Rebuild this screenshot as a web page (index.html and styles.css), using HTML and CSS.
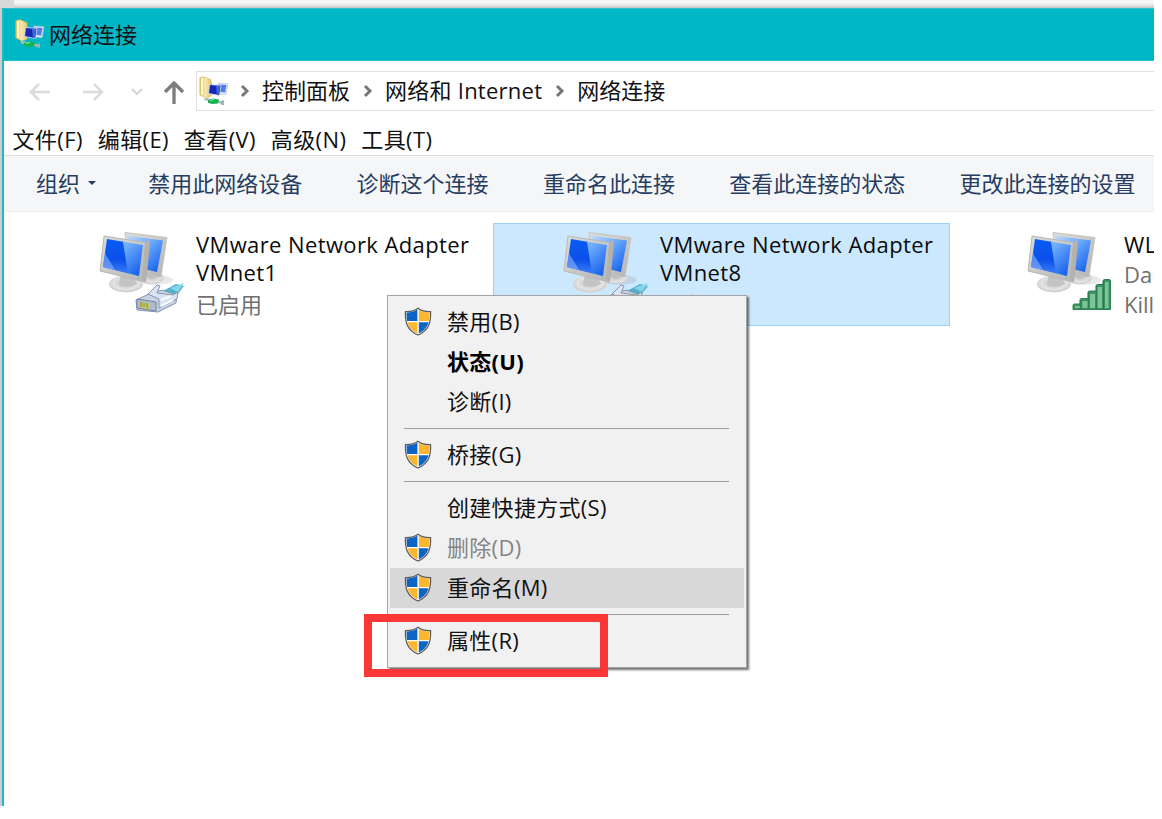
FILE: index.html
```html
<!DOCTYPE html>
<html lang="zh-CN">
<head>
<meta charset="utf-8">
<title>网络连接</title>
<link rel="stylesheet" href="styles.css">
</head>
<body>
<svg class="defs" width="0" height="0" aria-hidden="true">
  <defs>
    <linearGradient id="screen" x1="0" y1="0" x2="1" y2="1"><stop offset="0" stop-color="#b9dbff"/><stop offset=".45" stop-color="#65a5fb"/><stop offset="1" stop-color="#0a55ea"/></linearGradient>
    <linearGradient id="deep" x1="0" y1="0" x2="0" y2="1"><stop offset="0" stop-color="#0a5cf2"/><stop offset=".6" stop-color="#0b50ea"/><stop offset="1" stop-color="#3c7cf6"/></linearGradient>
    <linearGradient id="metal" x1="0" y1="0" x2="1" y2="1"><stop offset="0" stop-color="#dcdcda"/><stop offset="1" stop-color="#b4b4b3"/></linearGradient>
    <radialGradient id="foot" cx=".5" cy=".45" r=".6"><stop offset="0" stop-color="#b9b9b9"/><stop offset=".6" stop-color="#e4e4e4"/><stop offset="1" stop-color="#c4c4c4"/></radialGradient>
    <linearGradient id="paper" x1="0" y1="0" x2="1" y2="0"><stop offset="0" stop-color="#e3bf5c"/><stop offset=".5" stop-color="#f9e8ac"/><stop offset="1" stop-color="#e5c468"/></linearGradient>
    <symbol id="monitors" viewBox="0 0 88 86">
      <ellipse cx="56" cy="51" rx="18" ry="5" fill="#777" opacity=".16"/>
      <ellipse cx="53" cy="49" rx="12" ry="6" fill="url(#foot)"/>
      <path d="M48 39h11l1 9H47z" fill="#bbb"/>
      <path d="M26 3.500 68 8.500 62 48 28 42z" fill="url(#metal)" stroke="#c5c5c3"/>
      <path d="M29 7 64 11.500 58 43 31 37z" fill="url(#screen)"/>
      <ellipse cx="27" cy="55" rx="17" ry="8.500" fill="url(#foot)"/>
      <path d="M22 45h12l4 10q-10 6-18 0z" fill="#c4c4c4"/>
      <path d="M5 7 50 14 46 53 1 42z" fill="url(#metal)" stroke="#b9b9b7"/>
      <path d="M46 14 50 11 51 15 47 53 43 49z" fill="#b4b2af"/>
      <path d="M8 10 44 16 40 47 4 38z" fill="url(#screen)"/>
      <path d="M8 10 24 12.700 29 44.300 4 38z" fill="url(#deep)"/>
      <path d="M6 24 16 41 4 38z" fill="#91bcfb" opacity=".55"/>
    </symbol>
    <symbol id="plug" viewBox="0 0 52 34">
      <path d="m29 11 13-7 8 2-7 9-8 1z" fill="#4fb3cf"/>
      <path d="m36 8 14-5-6 9z" fill="#8bd4e6"/>
      <path d="M2 20 15 14l13-4 15 5-1 8-18 9-21-2z" fill="#c7d3e4" stroke="#8795ad"/>
      <path d="m14 14 9-9 3 1-3 7 16 2 5-3-1 7-18 9v-9z" fill="#dae4f1" stroke="#8997ae"/>
      <path d="M3 19 22 22v9L3 28z" fill="#aebccd" stroke="#76849a"/>
      <path d="m5 22 11 1.500v6L5 27z" fill="#cdca59"/>
      <path d="M7 22v5m3-4v4m3-4v5" stroke="#707e54" stroke-width=".9"/>
      <path d="m27 20 10-4M27 26l12-6" stroke="#f9fcff" stroke-width="2"/>
    </symbol>
    <symbol id="signal" viewBox="0 0 40 32">
      <path d="M1 30.500v-4q0-1.500 1.500-1.500H8v-4q0-1.500 1.500-1.500H16v-6q0-1.500 1.500-1.500H24V7q0-1.500 1.500-1.500H31V2q0-1.500 1.500-1.500H37q1.500 0 1.500 1.500v28.500z" fill="#3c9464" stroke="#2d7e52"/>
      <path d="M3 27h5v2H3zM10.500 22h5v7h-5zM18 15h5v14h-5zM25.500 8H30v21h-4.500zM33 3h3.500v26H33z" fill="#7cc397"/>
      <path d="M8.500 21v9M16.500 13v17M24.500 7v23M31.500 2v28" stroke="#2d7e52" stroke-width="1.300"/>
    </symbol>
    <symbol id="folder" viewBox="0 0 30 30">
      <path d="M10 5l3 2v11l-3 2z" fill="#d5ad44"/>
      <path d="M.8 1.500 5 .7l7 3v16.500L7 22 .8 19z" fill="url(#paper)" stroke="#d6b963" stroke-width=".6"/>
      <path d="M3 2v17" stroke="#fff8d8" stroke-width="1.800"/>
      <path d="m19 7 10 .7-2 11-9-1z" fill="#d9e5f8" stroke="#b4c2dd" stroke-width=".6"/>
      <path d="m20 8.500 7.500.5-1.500 7.500-7-1z" fill="#517ce8"/>
      <path d="m10.500 8.500 11.500 1-1.500 10-11-2z" fill="#1726b5" stroke="#dce5fa" stroke-width=".8"/>
      <path d="m17 9.500 4 .3-1 8.500-2.300-.5z" fill="#3f68dd"/>
      <path d="M5.500 23 25 27" stroke="#a6bcb9" stroke-width="2.300"/>
      <path d="m9 24.300 5-1.800 6 1-1 4-6 .5-4-1.200z" fill="#16b352"/>
      <path d="m11 24.500 4-1" stroke="#89efac"/>
      <path d="m22 26 3-1.300M22 27.500l3 1" stroke="#91aeb5" stroke-width="1.500"/>
    </symbol>
    <symbol id="shield" viewBox="0 0 28 29">
      <path d="M14 1.200C10.500 3.800 6 4.800 1.500 4.600 1 15 3 23.500 14 28 25 23.500 27 15 26.500 4.600 22 4.800 17.500 3.800 14 1.200z" fill="#fff"/>
      <path d="M13.400 2.600C10 4.800 6.500 5.600 2.600 5.600c-.1 3 0 5.800.5 8.400h10.300z" fill="#0c65c4"/>
      <path d="M14.800 2.600c3.200 2.200 6.700 3 10.600 3 .1 3 0 5.800-.5 8.400H14.800z" fill="#fdb62f"/>
      <path d="M3.400 15.300h10v11.200C7.500 23.700 4.700 20 3.400 15.300z" fill="#fdb62f"/>
      <path d="M24.600 15.300h-9.800v11.200c5.700-2.800 8.500-6.500 9.800-11.200z" fill="#0c65c4"/>
      <path d="M14 1.200C10.500 3.800 6 4.800 1.500 4.600 1 15 3 23.500 14 28 25 23.500 27 15 26.500 4.600 22 4.800 17.500 3.800 14 1.200z" fill="none" stroke="#595b5e" stroke-width="1.300"/>
    </symbol>
    <symbol id="chevron" viewBox="0 0 10 14"><path d="m2 2 5 5-5 5" fill="none" stroke="#767676" stroke-width="2.900"/></symbol>
  </defs>
</svg>
<div class="desktop">
  <div class="backdrop"></div>
  <main class="window">
    <header class="titlebar"><svg class="title-icon"><use href="#folder"/></svg><span>网络连接</span></header>
    <nav class="address-row">
      <div class="nav-buttons">
        <svg class="back" viewBox="0 0 22 18"><path d="M10 1 2 9l8 8M2 9h19" fill="none" stroke="#dcdcdc" stroke-width="2.600"/></svg>
        <svg class="forward" viewBox="0 0 22 18"><path d="m12 1 8 8-8 8M20 9H1" fill="none" stroke="#dcdcdc" stroke-width="2.600"/></svg>
        <svg class="recent" viewBox="0 0 12 8"><path d="m1 1 5 5 5-5" fill="none" stroke="#d4d4d4" stroke-width="2.200"/></svg>
        <svg class="up" viewBox="0 0 22 24"><path d="M2 11 11 2l9 9M11 2v21" fill="none" stroke="#7c7c7c" stroke-width="3.300"/></svg>
      </div>
      <div class="address">
        <svg class="address-icon"><use href="#folder"/></svg>
        <svg class="chev first"><use href="#chevron"/></svg><span>控制面板</span>
        <svg class="chev"><use href="#chevron"/></svg><span class="internet">网络和 Internet</span>
        <svg class="chev"><use href="#chevron"/></svg><span>网络连接</span>
      </div>
    </nav>
    <nav class="menubar"><span>文件(F)</span><span>编辑(E)</span><span>查看(V)</span><span>高级(N)</span><span>工具(T)</span></nav>
    <div class="toolbar">
      <span class="organize">组织<i class="caret"></i></span>
      <span>禁用此网络设备</span><span>诊断这个连接</span><span>重命名此连接</span><span>查看此连接的状态</span><span>更改此连接的设置</span>
    </div>
    <section class="connections">
      <article class="tile">
        <div class="device"><svg class="monitors"><use href="#monitors"/></svg><svg class="plug"><use href="#plug"/></svg></div>
        <div class="info"><div class="name">VMware Network Adapter<br>VMnet1</div><div class="state">已启用</div></div>
      </article>
      <article class="tile selected">
        <div class="device"><svg class="monitors"><use href="#monitors"/></svg><svg class="plug"><use href="#plug"/></svg></div>
        <div class="info"><div class="name">VMware Network Adapter<br>VMnet8</div><div class="state">已启用</div></div>
      </article>
      <article class="tile wireless">
        <div class="device"><svg class="monitors"><use href="#monitors"/></svg><svg class="signal"><use href="#signal"/></svg></div>
        <div class="info"><div class="name">WL</div><div class="state">Dar</div><div class="state">Kill</div></div>
      </article>
    </section>
  </main>
  <div class="context-menu">
    <div class="item"><svg class="shield"><use href="#shield"/></svg><span>禁用(B)</span></div>
    <div class="item strong"><span>状态(U)</span></div>
    <div class="item"><span>诊断(I)</span></div>
    <div class="separator"></div>
    <div class="item"><svg class="shield"><use href="#shield"/></svg><span>桥接(G)</span></div>
    <div class="separator"></div>
    <div class="item"><span>创建快捷方式(S)</span></div>
    <div class="item disabled"><svg class="shield"><use href="#shield"/></svg><span>删除(D)</span></div>
    <div class="item hover"><svg class="shield"><use href="#shield"/></svg><span>重命名(M)</span></div>
    <div class="separator"></div>
    <div class="item"><svg class="shield"><use href="#shield"/></svg><span>属性(R)</span></div>
  </div>
  <div class="highlight"></div>
</div>
</body>
</html>
```
FILE: styles.css
```css
* { box-sizing: border-box; }
body { margin: 0; background: #fff; color: #111; font: 22px/28px "Open Sans", "Noto Sans CJK SC", sans-serif; overflow: hidden; }
svg { display: block; flex: none; }
span { white-space: nowrap; }
.defs { position: absolute; }
.desktop { position: relative; width: 1154px; height: 806px; overflow: hidden; background: linear-gradient(90deg, #dccdca, #c7c7c7 2px); }
.backdrop { height: 8px; border-left: 14px solid #dadada; background: linear-gradient(#f5f5f5 0 3px, #ddd 6px, #c4c4c4); }
.window { height: 798px; margin-left: 2px; border-left: 2px solid #1abec6; background: #fff; }
.titlebar { display: flex; align-items: center; height: 53px; padding: 0 0 2px 11px; gap: 4px; background: #00b7c5; border-bottom: 1px solid #22bdca; border-top: 1px solid #35bec7; }
.title-icon { width: 30px; height: 30px; }
.address-row { display: flex; height: 50px; padding-top: 10px; }
.nav-buttons { display: flex; align-items: center; width: 192px; height: 41px; padding-left: 25px; }
.back, .forward { width: 22px; height: 18px; }
.forward { margin-left: 31px; }
.recent { width: 12px; height: 8px; margin-left: 27px; }
.up { width: 22px; height: 24px; margin: 2px 0 0 20px; }
.address { display: flex; flex: 1; align-items: center; height: 40px; border: 1px solid #dfdfdf; border-right: 0; padding-left: 2px; }
.address span { padding-bottom: 2px; }
.address-icon { width: 30px; height: 30px; margin-top: -1px; }
.chev { width: 10px; height: 14px; margin: 0 12px 0 13px; }
.chev.first { margin: 0 12px 0 11px; }
.internet { letter-spacing: .25px; }
.menubar { display: flex; align-items: center; gap: 14.900px; height: 44px; padding: 11px 0 0 8.500px; letter-spacing: .4px; }
.toolbar { display: flex; align-items: center; height: 57px; padding: 0 0 1px 32px; background: #f5f6f8; border-top: 1px solid #dedfe1; border-bottom: 1px solid #eee; color: #263c61; gap: 54.300px; }
.organize { display: flex; align-items: center; width: 58px; }
.caret { border: 4px solid transparent; border-top-color: #263c61; border-bottom: 0; margin-left: 8px; }
.connections { display: flex; gap: 7px; width: 1500px; padding: 11px 0 0 25px; }
.tile { display: flex; flex: none; width: 457px; height: 103px; padding-left: 69px; border: 1px solid transparent; }
.selected { background: #cce8ff; border-color: #99d1ff; }
.device { display: grid; width: 97px; height: 90px; padding-top: 5px; }
.monitors, .plug, .signal { grid-area: 1 / 1; }
.monitors { width: 88px; height: 86px; }
.plug { width: 52px; height: 34px; margin: 51px 0 0 35px; }
.signal { width: 40px; height: 32px; margin: 50px 0 0 45px; }
.info { padding-top: 6px; }
.name { color: #0b0b0b; white-space: nowrap; letter-spacing: .39px; line-height: 28px; }
.state { color: #707070; line-height: 32px; margin-top: 2px; }
.wireless .state { line-height: 29px; margin-top: 1px; }
.wireless .name + .state { margin-top: 2px; }
.context-menu { position: absolute; left: 387px; top: 295px; width: 360px; height: 373px; padding: 6px 2px; border: 1px solid #a5a5a5; background: #f1f1f1; box-shadow: 2px 2px 2px rgba(0,0,0,.55); }
.item { display: flex; align-items: center; height: 40px; padding: 0 0 2px 57px; letter-spacing: .3px; }
.shield { width: 28px; height: 29px; margin: 0 15px 0 -43px; }
.strong { font-weight: 700; color: #000; }
.disabled { color: #858585; }
.hover { background: #d8d8d8; }
.separator { height: 13px; padding-top: 6px; margin: 0 15px 0 14px; }
.separator::before { content: ""; display: block; height: 1px; background: #a0a0a0; }
.highlight { position: absolute; left: 364px; top: 614px; width: 244px; height: 63px; border: 8px solid #fb3838; }
```
